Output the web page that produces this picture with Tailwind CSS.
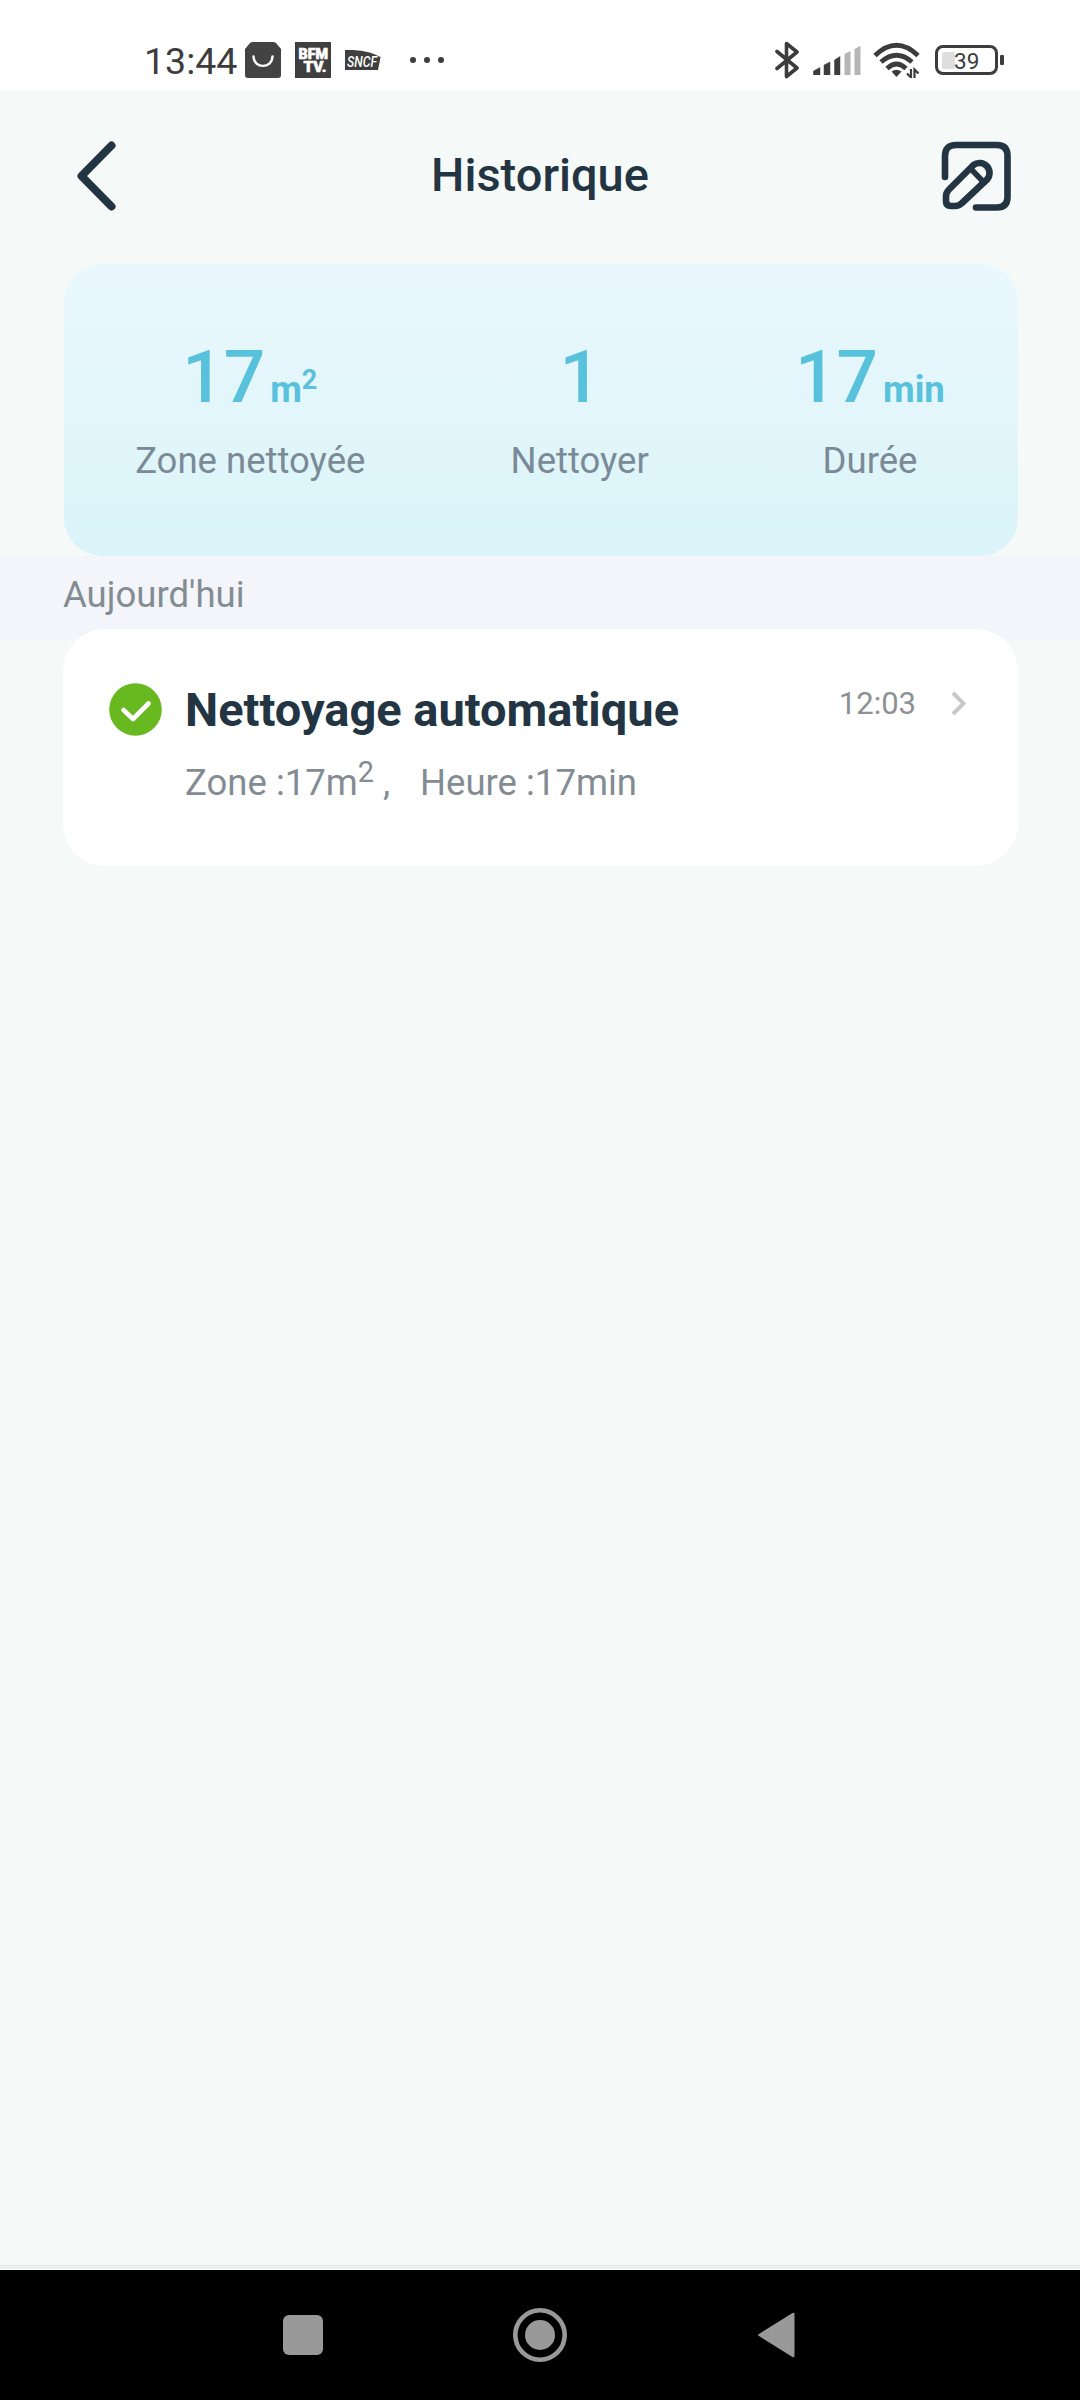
<!DOCTYPE html>
<html lang="fr">
<head>
    <meta charset="UTF-8">
    <meta name="viewport" content="width=device-width, initial-scale=1.0">
    <title>Historique</title>
    <script src="https://cdn.jsdelivr.net/npm/@tailwindcss/browser@4"></script>
</head>
<body class="bg-[#f5f9f8] font-[Roboto,'Noto_Sans_CJK_SC',sans-serif]">
    <div class="w-[1080px] h-[2400px] flex flex-col overflow-hidden">
        <!-- Status bar -->
        <div class="h-[91px] shrink-0 bg-white pt-[29px] pl-[144px] pr-[76px] flex items-center justify-between text-[#3c3c3c]">
            <div class="flex items-center">
                <span class="w-[101px] text-[37.5px] leading-[40px] pt-[2px]">13:44</span>
                <svg class="w-9 h-9" viewBox="0 0 36 36">
                    <path d="M0 7 L5 1 Q6 0 8 0 H28 Q30 0 31 1 L36 7 V33 Q36 36 33 36 H3 Q0 36 0 33Z" fill="#434343"/>
                    <path d="M8.500 14.500 C9 27 27 27 27.500 14.500" fill="none" stroke="#fff" stroke-width="2.400" stroke-linecap="round"/>
                </svg>
                <svg class="w-9 h-9 ml-[14px]" viewBox="0 0 36 36">
                    <rect width="36" height="36" fill="#3f3f3f"/>
                    <text x="3.500" y="17" textLength="29.500" lengthAdjust="spacingAndGlyphs" font-family="Roboto" font-weight="900" font-size="14" fill="#fff" stroke="#fff" stroke-width=".6">BFM</text>
                    <text x="8.500" y="29.500" textLength="23" lengthAdjust="spacingAndGlyphs" font-family="Roboto" font-weight="900" font-size="14" fill="#fff" stroke="#fff" stroke-width=".6">TV.</text>
                </svg>
                <svg class="w-9 h-9 ml-[14px]" viewBox="0 0 36 36">
                    <path d="M0 8 H8 Q25 9 35.500 15 L33 28 H0Z" fill="#3f3f3f"/>
                    <text x="2" y="25" textLength="30" lengthAdjust="spacingAndGlyphs" font-family="Roboto" font-style="italic" font-weight="500" font-size="14" fill="#fff">SNCF</text>
                </svg>
                <div class="flex gap-[8px] ml-[29px]">
                    <i class="w-[6px] h-[6px] rounded-full bg-[#3c3c3c]"></i>
                    <i class="w-[6px] h-[6px] rounded-full bg-[#3c3c3c]"></i>
                    <i class="w-[6px] h-[6px] rounded-full bg-[#3c3c3c]"></i>
                </div>
            </div>
            <div class="flex items-center">
                <svg class="w-[26px] h-[38px]" viewBox="0 0 26 38" fill="none" stroke="#3c3c3c" stroke-width="3.600" stroke-linejoin="round" stroke-linecap="round">
                    <path d="M2 10.500 L22 27 L11.500 35.500 V2.500 L22 11 L2 27.500"/>
                </svg>
                <svg class="w-[48px] h-[30px] ml-[12px]" viewBox="0 0 48 30">
                    <path d="M.5 30 V26 L7 22.500 V30Z M11 30 V20 L17 17 V30Z M21.500 30 V15 L27 11.500 V30Z" fill="#3c3c3c" stroke="#3c3c3c" stroke-width=".5" stroke-linejoin="round"/>
                    <path d="M31.500 30 V9 L37.500 6 V30Z M41.500 30 V4 L47.500 .8 V30Z" fill="#b5b5b5"/>
                </svg>
                <svg class="w-[48px] h-[36px] ml-[12px]" viewBox="0 0 48 36" fill="none" stroke="#3c3c3c" stroke-width="4.800" stroke-linecap="butt">
                    <path d="M2 13.500 Q23.500 -7 45 13.500"/>
                    <path d="M8 20 Q23.500 6.500 39 20"/>
                    <path d="M14 26.500 Q23.500 17.500 33 26.500"/>
                    <path d="M18.500 29.500 Q23.500 26 28.500 29.500 L23.500 35Z" fill="#3c3c3c" stroke="none"/>
                    <path d="M38 27 V35.500 L34 31.500 M41.500 36 V27.500 L45.500 31.500" stroke-width="2.200"/>
                </svg>
                <div class="ml-[14px] w-[63px] h-[30px] rounded-[8px] border-3 border-[#3c3c3c] flex items-center pl-[4px]">
                    <i class="w-[13px] h-[17px] bg-[#dedede] rounded-[2px]"></i>
                    <span class="text-[22.500px] leading-[24px] -ml-[1px] pt-[1px]">39</span>
                </div>
                <i class="ml-[2px] w-[4px] h-[10px] rounded-[1px] bg-[#3c3c3c]"></i>
            </div>
        </div>

        <!-- Header -->
        <header class="h-[173px] shrink-0 pl-[76px] pr-[69px] pb-[3px] flex items-center justify-between">
            <svg class="w-[63px] h-[72px]" viewBox="0 0 63 72" fill="none" stroke="#233443" stroke-width="8" stroke-linecap="round" stroke-linejoin="round">
                <path d="M35.500 5.500 L5.500 36 L35.500 66.500"/>
            </svg>
            <h1 class="text-[47px] leading-[60px] font-medium text-[#233443] pb-[2px]">Historique</h1>
            <svg class="w-[70px] h-[70px]" viewBox="0 0 70 70" fill="none" stroke="#233443" stroke-width="6.600" stroke-linecap="round" stroke-linejoin="round">
                <path d="M4 36 V15 Q4 4 15 4 H56 Q66.500 4 66.500 15 V56 Q66.500 66.500 56 66.500 H35"/>
                <path d="M32.500 24 L8 48.500 Q5 51.500 5 55.500 V60 Q5 65 10 65 H14 Q18 65 21 62 L46.500 38 A10 10 0 0 0 32.500 24Z"/>
                <path d="M30 28 L42.500 41" stroke-width="5.500"/>
            </svg>
        </header>

        <!-- Totals -->
        <section class="mx-[64px] mr-[62px] h-[292px] shrink-0 rounded-[38px] bg-linear-to-b from-[#eaf8fd] to-[#daf4f9] flex justify-around text-center text-[#58c1dc]">
            <div>
                <div class="pt-[71px] text-[73px] leading-[84px] font-medium -ml-[3px]">17<span class="text-[36.500px] font-bold leading-none ml-[5px]">m<span class="relative -top-[13px] text-[27px]">2</span></span></div>
                <div class="text-[36.500px] leading-[44px] mt-[20px] -ml-[2px] text-[#7b8a97]">Zone nettoyée</div>
            </div>
            <div>
                <div class="pt-[71px] text-[73px] leading-[84px] font-medium">1</div>
                <div class="text-[36.500px] leading-[44px] mt-[20px] -ml-[1px] text-[#7b8a97]">Nettoyer</div>
            </div>
            <div>
                <div class="pt-[71px] text-[73px] leading-[84px] font-medium">17<span class="text-[36.500px] font-bold leading-none ml-[5px]">min</span></div>
                <div class="text-[36.500px] leading-[44px] mt-[20px] text-[#7b8a97]">Durée</div>
            </div>
        </section>

        <!-- Day group -->
        <section class="shrink-0 bg-linear-to-b from-[#f4f5fb] from-[80px] to-[#f5f9f8] to-[86px]">
            <h2 class="h-[73px] pl-[63px] pt-[17px] text-[36.500px] leading-[44px] text-[#838c93]">Aujourd'hui</h2>
            <div class="mx-[63px] mr-[62px] h-[237px] rounded-[42px] bg-white pl-[46px] pr-[51px] pt-[54px] flex items-start">
                <svg class="w-[53px] h-[53px]" viewBox="0 0 53 53">
                    <circle cx="26.500" cy="26.500" r="26.300" fill="#68b820"/>
                    <path d="M14.500 27 L24 36 L39.500 20.500" fill="none" stroke="#fff" stroke-width="4.600" stroke-linecap="round" stroke-linejoin="round"/>
                </svg>
                <div class="ml-[23px] grow">
                    <div class="text-[47px] leading-[54px] font-bold text-[#233443] whitespace-nowrap">Nettoyage automatique</div>
                    <div class="text-[36.500px] leading-[44px] mt-[24px] text-[#838c93] whitespace-nowrap">Zone :17m<span class="relative -top-[13px] text-[29px] leading-none">2</span><span class="inline-block w-[46px] pl-[9px] leading-none">,</span>Heure :17min</div>
                </div>
                <div class="flex items-center pt-[2px]">
                    <span class="text-[31px] leading-[36px] pt-px text-[#8d9194]">12:03</span>
                    <svg class="ml-[35px] w-[16px] h-[26px]" viewBox="0 0 16 26" fill="none" stroke="#c6c8c9" stroke-width="4" stroke-linecap="butt" stroke-linejoin="miter">
                        <path d="M2 2 L12.500 12.500 L2 23"/>
                    </svg>
                </div>
            </div>
        </section>

        <!-- Navigation bar -->
        <div class="mt-auto h-[5px] shrink-0 flex flex-col gap-px">
            <i class="h-px bg-[#dfe5e5]"></i>
            <i class="h-px bg-[#dfe5e5]"></i>
        </div>
        <nav class="h-[130px] shrink-0 bg-black pl-[283px] pr-[285px] flex items-center justify-between">
            <i class="w-[40px] h-[40px] rounded-[6px] bg-[#999]"></i>
            <svg class="w-[54px] h-[54px]" viewBox="0 0 54 54">
                <circle cx="27" cy="27" r="24.700" fill="none" stroke="#999" stroke-width="4.600"/>
                <circle cx="27" cy="27" r="15" fill="#999"/>
            </svg>
            <svg class="w-[38px] h-[46px]" viewBox="0 0 38 46">
                <path d="M2 22 L35.500 1 Q37.500 0 37.500 2 V44 Q37.500 46 35.500 45 L2 24 Q0 23 2 22Z" fill="#999"/>
            </svg>
        </nav>
    </div>
</body>
</html>
